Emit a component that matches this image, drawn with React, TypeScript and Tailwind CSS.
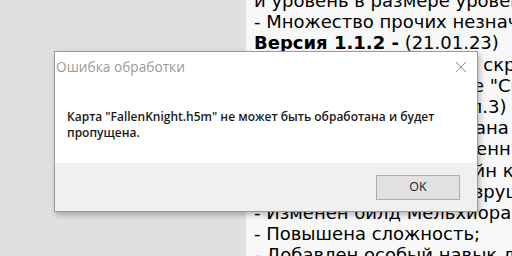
import React from "react";

const lines: React.ReactNode[] = [
  "и уровень в размере уровень героя;",
  "- Множество прочих незначительных правок.",
  <>
    <b>Версия 1.1.2 -</b> (21.01.23)
  </>,
  "- Исправлена ошибка в \u2009скрипте;",
  "- Изменён текст в книге \"Свиток\";",
  "- Исправлена ошибка (п.3)",
  "- Добавлена новая\u00a0\u00a0охрана",
  "-Улучшены свойства военных",
  "- Изменён старый дизайн карты;",
  "- Дана возможность разрушения",
  "- Изменен билд Мельхиора;",
  "- Повышена сложность;",
  "- Добавлен особый навык для героя;",
];

export default function App() {
  return (
    <div className="relative w-[512px] h-[256px] overflow-hidden flex bg-[#e0e0e0]">
      <div className="w-[246px] shrink-0" />
      <div className="flex-1 bg-[#f8f8f8] overflow-hidden pl-2 font-['DejaVu_Sans',sans-serif] text-[18px] text-black">
        <div className="-mt-[10px]">
          {lines.map((l, i) => (
            <div key={i} className="whitespace-nowrap leading-[21.2px]">
              {l}
            </div>
          ))}
        </div>
      </div>

      {/* dialog */}
      <div className="absolute left-[54px] top-[51px] w-[424px] h-[161px] flex flex-col bg-white border border-[#9a9a9a] shadow-[2px_3px_6px_rgba(0,0,0,0.25)] font-['Open_Sans',sans-serif]">
        <div className="flex items-center justify-between pl-[1px] pr-[10px] h-[30px]">
          <span className="text-[13.7px] text-[#9a9a9a]">Ошибка обработки</span>
          <svg width="12" height="12" viewBox="0 0 12 12" className="text-[#8a8a8a]">
            <path d="M1 1 L11 11 M11 1 L1 11" stroke="currentColor" strokeWidth="1" />
          </svg>
        </div>
        <div className="flex-1 pl-[12px] pt-[27px] pr-4 text-[12px] leading-[16px] font-semibold text-[#1a1a1a]">
          Карта "FallenKnight.h5m" не может быть обработана и будет
          <br />
          пропущена.
        </div>
        <div className="h-[48px] bg-[#f0f0f0] flex items-center justify-end pr-[17px]">
          <button className="w-[84px] h-[25px] border border-[#adadad] bg-[#e1e1e1] text-[12.5px] text-[#1a1a1a]">
            OK
          </button>
        </div>
      </div>
    </div>
  );
}
